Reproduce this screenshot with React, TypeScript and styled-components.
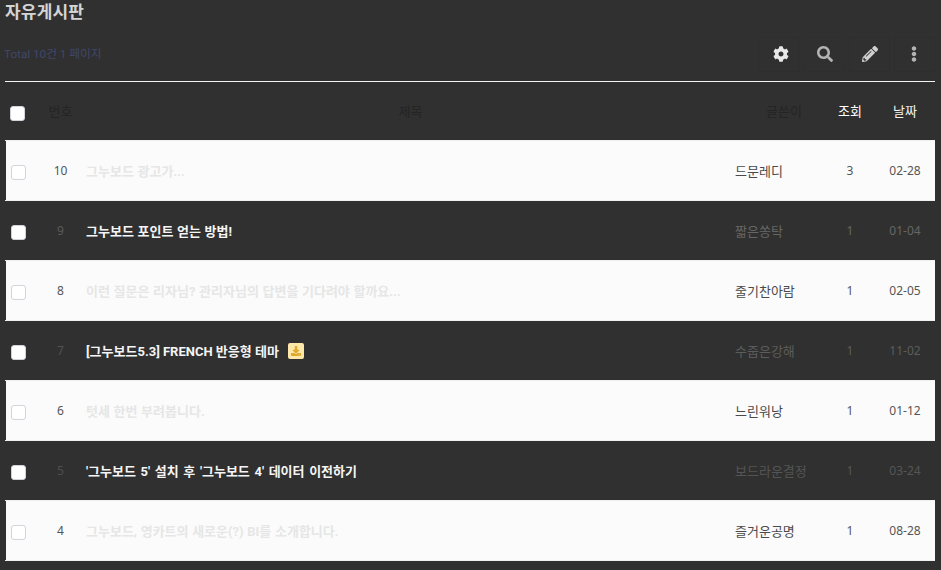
import React from "react";
import styled, { createGlobalStyle } from "styled-components";
import { FaCog, FaSearch, FaPencilAlt, FaEllipsisV, FaDownload } from "react-icons/fa";

const Global = createGlobalStyle`
  html, body { margin: 0; padding: 0; background: #303030; }
  body { font-family: "Roboto", "Noto Sans CJK KR", "Liberation Sans", sans-serif; font-size: 13px; overflow: hidden; }
`;

const Page = styled.div`
  width: 941px;
  height: 570px;
  box-sizing: border-box;
  padding: 0 6px 0 5px;
  background: #303030;
  overflow: hidden;
`;
const Title = styled.h1`
  margin: 0;
  height: 25px;
  font-size: 17px;
  line-height: 24px;
  font-weight: 700;
  letter-spacing: 0.2px;
  color: #d4d4d4;
`;
const Toolbar = styled.div`
  display: flex;
  align-items: center;
  justify-content: space-between;
  height: 57px;
  box-sizing: border-box;
  padding-top: 2px;
  border-bottom: 1px solid #f4f4f4;
`;
const Total = styled.span`
  margin-left: -1px;
  font-size: 11.7px;
  line-height: 16px;
  color: #41476a;
`;
const Tools = styled.div`
  display: flex;
  gap: 4px;
`;
const Tool = styled.button<{ $c: string; $left?: number; $right?: number }>`
  width: 41px;
  height: 35px;
  padding: 0 ${(p) => p.$right ?? 0}px 0 ${(p) => p.$left ?? 0}px;
  border: 1px solid #2e2e2e;
  background: transparent;
  color: ${(p) => p.$c};
  display: flex;
  align-items: center;
  justify-content: center;
  font-size: 16px;
`;
const columns = "37px 37px 656px 98px 34px 1fr";
const HeadRow = styled.div`
  display: grid;
  grid-template-columns: ${columns};
  height: 58px;
  align-items: center;
`;
const HeadCell = styled.span<{ $c: string; $pad?: number }>`
  color: ${(p) => p.$c};
  text-align: center;
  white-space: nowrap;
  padding: 0 0 1px ${(p) => p.$pad ?? 0}px;
`;
const Row = styled.div<{ $light: boolean }>`
  display: grid;
  grid-template-columns: ${columns};
  align-items: center;
  box-sizing: border-box;
  height: ${(p) => (p.$light ? 61 : 59)}px;
  background: ${(p) => (p.$light ? "#fbfbfb" : "#303030")};
  ${(p) => p.$light && `box-shadow: inset 1px 0 0 #303030; border-top: 1px solid #f0f0f0; border-bottom: 1px solid #f0f0f0;`}
`;
const Box = styled.span<{ $left: number; $top: number }>`
  display: block;
  box-sizing: border-box;
  width: 15px;
  height: 15px;
  margin: ${(p) => p.$top}px 0 0 ${(p) => p.$left}px;
  background: #fff;
  border: 1px solid #d3d3dc;
  border-radius: 3px;
`;
const Num = styled.span<{ $c: string }>`
  color: ${(p) => p.$c};
  font-family: "Noto Sans", sans-serif;
  font-size: 12px;
  text-align: center;
`;
const Subject = styled.span<{ $light: boolean; $space: number }>`
  display: flex;
  align-items: center;
  gap: 9px;
  padding-left: 7px;
  font-weight: 700;
  word-spacing: ${(p) => p.$space}px;
  color: ${(p) => (p.$light ? "#e6e6e6" : "#f5f5f5")};
`;
const Author = styled.span<{ $c: string }>`
  color: ${(p) => p.$c};
`;
const Views = styled(Num)``;
const DateCell = styled(Num)`
  padding-left: 8px;
  white-space: nowrap;
`;
const FileBadge = styled.span`
  display: inline-flex;
  align-items: center;
  justify-content: center;
  width: 16px;
  height: 16px;
  border-radius: 2px;
  background: #fde8a9;
  color: #dfa92c;
  font-size: 10px;
`;

type Item = { n: number; t: string; a: string; v: number; d: string; file?: boolean; nc?: string; ac?: string; oc?: string; sp?: number };
const items: Item[] = [
  { n: 10, t: "그누보드 광고가...", a: "드문레디", v: 3, d: "02-28" },
  { n: 9, t: "그누보드 포인트 얻는 방법!", a: "짧은쏭탁", v: 1, d: "01-04", nc: "#5a5a5a", ac: "#666666", oc: "#666666" },
  { n: 8, t: "이런 질문은 리자님? 관리자님의 답변을 기다려야 할까요...", a: "줄기찬아람", v: 1, d: "02-05" },
  { n: 7, t: "[그누보드5.3] FRENCH 반응형 테마", a: "수줍은강해", v: 1, d: "11-02", file: true, nc: "#525252", ac: "#5c5c5c", oc: "#5c5c5c", sp: 0 },
  { n: 6, t: "텃세 한번 부려봅니다.", a: "느린워낭", v: 1, d: "01-12" },
  { n: 5, t: "'그누보드 5' 설치 후 '그누보드 4' 데이터 이전하기", a: "보드라운결정", v: 1, d: "03-24", nc: "#4e4e4e", ac: "#545454", oc: "#565656", sp: 1.4 },
  { n: 4, t: "그누보드, 영카트의 새로운(?) BI를 소개합니다.", a: "즐거운공명", v: 1, d: "08-28" },
];

export default function App() {
  return (
    <Page>
      <Global />
      <Title>자유게시판</Title>
      <Toolbar>
        <Total>Total 10건 1 페이지</Total>
        <Tools>
          <Tool $c="#e8e8e8" $left={2} aria-label="설정"><FaCog /></Tool>
          <Tool $c="#b4b4b4" aria-label="검색"><FaSearch /></Tool>
          <Tool $c="#d0d0d0" aria-label="글쓰기"><FaPencilAlt /></Tool>
          <Tool $c="#b4b4b4" $right={2} aria-label="더보기"><FaEllipsisV /></Tool>
        </Tools>
      </Toolbar>
      <HeadRow>
        <Box $left={5} $top={5} />
        <HeadCell $c="#242424">번호</HeadCell>
        <HeadCell $c="#242424" $pad={7}>제목</HeadCell>
        <HeadCell $c="#242424">글쓴이</HeadCell>
        <HeadCell $c="#ffffff">조회</HeadCell>
        <HeadCell $c="#f4f4f4" $pad={8}>날짜</HeadCell>
      </HeadRow>
      {items.map((it, i) => {
        const light = i % 2 === 0;
        return (
          <Row key={it.n} $light={light}>
            <Box $left={6} $top={4} />
            <Num $c={it.nc ?? "#555555"}>{it.n}</Num>
            <Subject $light={light} $space={it.sp ?? 0.4}>
              {it.t}
              {it.file && <FileBadge><FaDownload /></FileBadge>}
            </Subject>
            <Author $c={it.ac ?? "#4a4a4a"}>{it.a}</Author>
            <Views $c={it.oc ?? "#555555"}>{it.v}</Views>
            <DateCell $c={it.oc ?? "#555555"}>{it.d}</DateCell>
          </Row>
        );
      })}
    </Page>
  );
}
